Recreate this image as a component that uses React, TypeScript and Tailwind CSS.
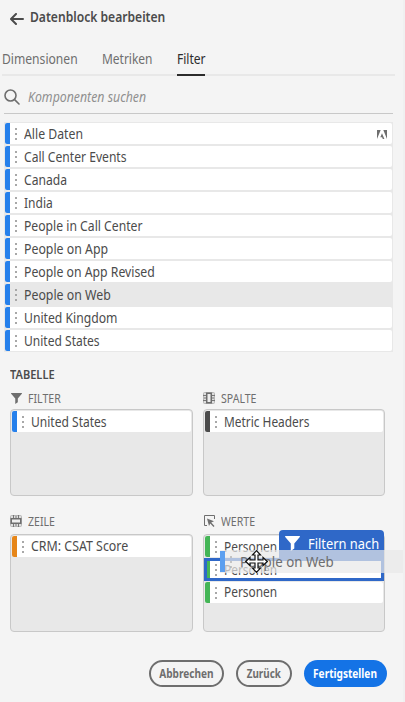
import React from "react";

const noto = "font-['Noto_Sans','Open_Sans',sans-serif]";

function Dots() {
  return (
    <span className="ml-[5px] flex w-[2px] shrink-0 flex-col gap-[3px]">
      {[0, 1, 2].map((i) => (
        <span key={i} className="h-[2px] w-[2px] bg-[#a8a8a8]" />
      ))}
    </span>
  );
}

function Row({ label, bar, hover, scale = "scale-x-[.87]", adobe }: { label: string; bar: string; hover?: boolean; scale?: string; adobe?: boolean }) {
  return (
    <div className={`flex h-[21px] shrink-0 items-center overflow-hidden rounded-[2px] ${hover ? "bg-[#e8e8e8]" : "bg-white"}`}>
      <span className={`h-full w-[5px] shrink-0 ${bar}`} />
      <Dots />
      <span className="ml-[7px] grow whitespace-nowrap text-[14px] leading-[21px] text-[#4b4b4b]">
        <span className={`inline-block origin-left ${scale}`}>{label}</span>
      </span>
      {adobe && (
        <svg className="mr-[5px] mt-[2px] shrink-0" width="10" height="10" viewBox="0 0 10 10" fill="#6e6e6e">
          <path d="M0 0h3.7L0 9zM6.3 0H10v9zM5 3.2L7.4 9H5.8L5.1 7.2H3.3z" />
        </svg>
      )}
    </div>
  );
}

const segments: [string, string][] = [
  ["Alle Daten", "scale-x-[.875]"],
  ["Call Center Events", "scale-x-[.865]"],
  ["Canada", "scale-x-[.865]"],
  ["India", "scale-x-[.86]"],
  ["People in Call Center", "scale-x-[.87]"],
  ["People on App", "scale-x-[.88]"],
  ["People on App Revised", "scale-x-[.875]"],
  ["People on Web", "scale-x-[.88]"],
  ["United Kingdom", "scale-x-[.87]"],
  ["United States", "scale-x-[.86]"],
];

function Funnel({ className, size, fill }: { className?: string; size: number; fill: string }) {
  return (
    <svg className={`shrink-0 ${className ?? ""}`} width={size} height={size} viewBox="0 0 15 15" fill={fill}>
      <path d="M.5 0h14c.5 0 .6.5.3.9L9.3 7.4v5.2L5.800 15V7.400L.2.9C-.1.5 0 0 .5 0z" />
    </svg>
  );
}

function TableIcon({ row }: { row?: boolean }) {
  return (
    <svg width="12" height="12" viewBox="0 0 12 12" fill="none" className={row ? "rotate-90" : ""}>
      <rect x=".5" y=".5" width="11" height="11" rx="1" fill="#dedede" stroke="#b4b4b4" />
      <path d="M0 3.500h3M0 8.500h3M9 3.500h3M9 8.500h3M1 6h2M9 6h2" stroke="#777" />
      <rect x="3.750" y="1.250" width="4.500" height="9.500" fill="#eee" stroke="#6e6e6e" strokeWidth="1.500" />
    </svg>
  );
}

function ValueIcon() {
  return (
    <svg width="12" height="12" viewBox="0 0 12 12" fill="none">
      <path d="M4 10.500H1.500V.500h10V4" stroke="#6e6e6e" />
      <path d="M4 3.500l7 2.800-2.800 1.200L11.500 11l-1 1-3.200-3.500L6 11z" fill="#6e6e6e" />
    </svg>
  );
}

function Zone({ title, icon, head, height, children }: { title: string; icon: React.ReactNode; head: string; height: string; children: React.ReactNode }) {
  return (
    <section>
      <div className={`flex items-start ${head}`}>
        <span className="flex h-[16px] w-[18px] shrink-0 items-center">{icon}</span>
        <span className="origin-left scale-x-[.88] whitespace-nowrap text-[12px] leading-[17px] text-[#6e6e6e]">{title}</span>
      </div>
      <div className={`flex flex-col gap-[2px] rounded-[4px] border border-[#c8c8c8] bg-[#e8e8e8] p-px ${height}`}>{children}</div>
    </section>
  );
}

function MoveCursor() {
  return (
    <svg className="absolute left-[25px] top-0" width="23" height="23" viewBox="0 0 23 23" fill="#fff" stroke="#111" strokeWidth="1.200">
      <path d="M11.500.700l4 4.300h-2.500v5h5V7.500l4.300 4-4.300 4v-2.500h-5v5h2.500l-4 4.300-4-4.300h2.500v-5H5v2.500l-4.300-4L5 7.500V10h5V5H7.500z" />
    </svg>
  );
}

export default function App() {
  return (
    <main className={`relative flex h-[702px] w-[405px] flex-col overflow-hidden border-r-2 border-[#f0f0f0] bg-[#f4f4f4] ${noto}`}>
      <header className="flex h-[34px] items-center pl-[10px]">
        <svg className="mt-[4px] shrink-0" width="14" height="12" viewBox="0 0 14 12" fill="none" stroke="#4b4b4b" strokeWidth="2" strokeLinecap="round" strokeLinejoin="round">
          <path d="M13 6H1.500M6 1L1 6l5 5" />
        </svg>
        <h1 className="mb-[1px] ml-[6px] origin-left scale-x-[.865] whitespace-nowrap text-[14px] font-semibold text-[#4b4b4b]">Datenblock bearbeiten</h1>
      </header>
      <nav className="ml-[2px] mt-[14px] flex h-[28px] w-[393px] shrink-0 border-b-2 border-[#e8e8e8] text-[14px] leading-[22px] text-[#6e6e6e]">
        <span className="w-[100px]"><span className="inline-block origin-left scale-x-[.865]">Dimensionen</span></span>
        <span className="w-[75px]"><span className="inline-block origin-left scale-x-[.855]">Metriken</span></span>
        <span className="h-[28px] w-[28px] border-b-2 border-[#2c2c2c] text-[#2c2c2c]"><span className="inline-block origin-left scale-x-[.86]">Filter</span></span>
      </nav>
      <div className="ml-[4px] mt-[9px] flex h-[29px] w-[389px] shrink-0 border-b border-[#c8c8c8]">
        <svg className="mt-[4px] shrink-0" width="16" height="16" viewBox="0 0 16 16" fill="none" stroke="#6e6e6e" strokeWidth="1.600" strokeLinecap="round">
          <circle cx="6.500" cy="6.500" r="5.500" /><path d="M10.600 10.600L15 15" />
        </svg>
        <span className="ml-[8px] origin-left scale-x-[.88] whitespace-nowrap text-[14px] italic leading-[23px] text-[#909090]">Komponenten suchen</span>
      </div>
      <div className="ml-[4px] mt-[8px] flex w-[389px] shrink-0 flex-col gap-[2px] border border-[#e8e8e8] bg-[#e8e8e8]">
        {segments.map(([s, sc]) => (
          <Row key={s} label={s} scale={sc} bar="bg-[#2680eb]" hover={s === "People on Web"} adobe={s === "Alle Daten"} />
        ))}
      </div>
      <h2 className="ml-[10px] mt-[14px] h-[17px] origin-left scale-x-[.92] text-[12px] font-semibold leading-[17px] text-[#4b4b4b]">TABELLE</h2>
      <div className="ml-[10px] mt-[6px] grid w-[375px] grid-cols-[183px_182px] gap-x-[10px] gap-y-[17px]">
        <Zone title="FILTER" head="h-[20px] pt-px" height="h-[87px]" icon={<Funnel className="ml-px" size={11} fill="#6e6e6e" />}>
          <Row label="United States" scale="scale-x-[.86]" bar="bg-[#2680eb]" />
        </Zone>
        <Zone title="SPALTE" head="h-[20px] pt-px" height="h-[87px]" icon={<TableIcon />}>
          <Row label="Metric Headers" scale="scale-x-[.85]" bar="bg-[#4b4b4b]" />
        </Zone>
        <Zone title="ZEILE" head="h-[21px]" height="h-[98px]" icon={<TableIcon row />}>
          <Row label="CRM: CSAT Score" scale="-translate-y-px scale-x-[.885]" bar="bg-[#e68619]" />
        </Zone>
        <div className="relative">
          <Zone title="WERTE" head="h-[21px]" height="h-[98px]" icon={<ValueIcon />}>
            <Row label="Personen" scale="scale-x-[.85]" bar="bg-[#44b556]" />
            <Row label="Personen" scale="scale-x-[.85]" bar="bg-[#44b556]" />
            <Row label="Personen" scale="-translate-y-px scale-x-[.85]" bar="bg-[#44b556]" />
          </Zone>
          <div className="absolute left-[1px] top-[45px] h-[23px] w-[180px] border-[3px] border-[#2f68c8]" />
          <div className="absolute left-[76px] top-[17px] flex h-[30px] w-[105px] rounded-t-[4px] bg-[#2f68c8] pl-[6px] pt-[5px]">
            <Funnel className="mt-px" size={15} fill="#fff" />
            <span className="ml-[8px] origin-left scale-x-[.92] whitespace-nowrap text-[14px] leading-[17px] text-white">Filtern nach</span>
          </div>
          <div className="absolute left-[17px] top-[37px] h-[23px] w-[183px] bg-[#e8e8e8]/70 py-px">
            <div className="flex h-[21px] items-center">
              <span className="h-full w-[5px] bg-[#5b9ff0]" />
              <span className="opacity-60"><Dots /></span>
              <span className="ml-[8px] origin-left scale-x-[.95] whitespace-nowrap text-[14px] text-[#6e6e6e]">People on Web</span>
            </div>
            <MoveCursor />
          </div>
        </div>
      </div>
      <footer className="ml-[149px] mt-[28px] flex gap-[12px] text-[12px] font-bold leading-none">
        <button className="flex h-[27px] w-[75px] items-center justify-center rounded-full border-2 border-[#6e6e6e] text-[#6e6e6e]"><span className="scale-x-[.84]">Abbrechen</span></button>
        <button className="flex h-[27px] w-[56px] items-center justify-center rounded-full border-2 border-[#6e6e6e] text-[#6e6e6e]"><span className="scale-x-[.82]">Zurück</span></button>
        <button className="flex h-[27px] w-[83px] items-center justify-center rounded-full bg-[#1473e6] text-white"><span className="scale-x-[.84]">Fertigstellen</span></button>
      </footer>
    </main>
  );
}
